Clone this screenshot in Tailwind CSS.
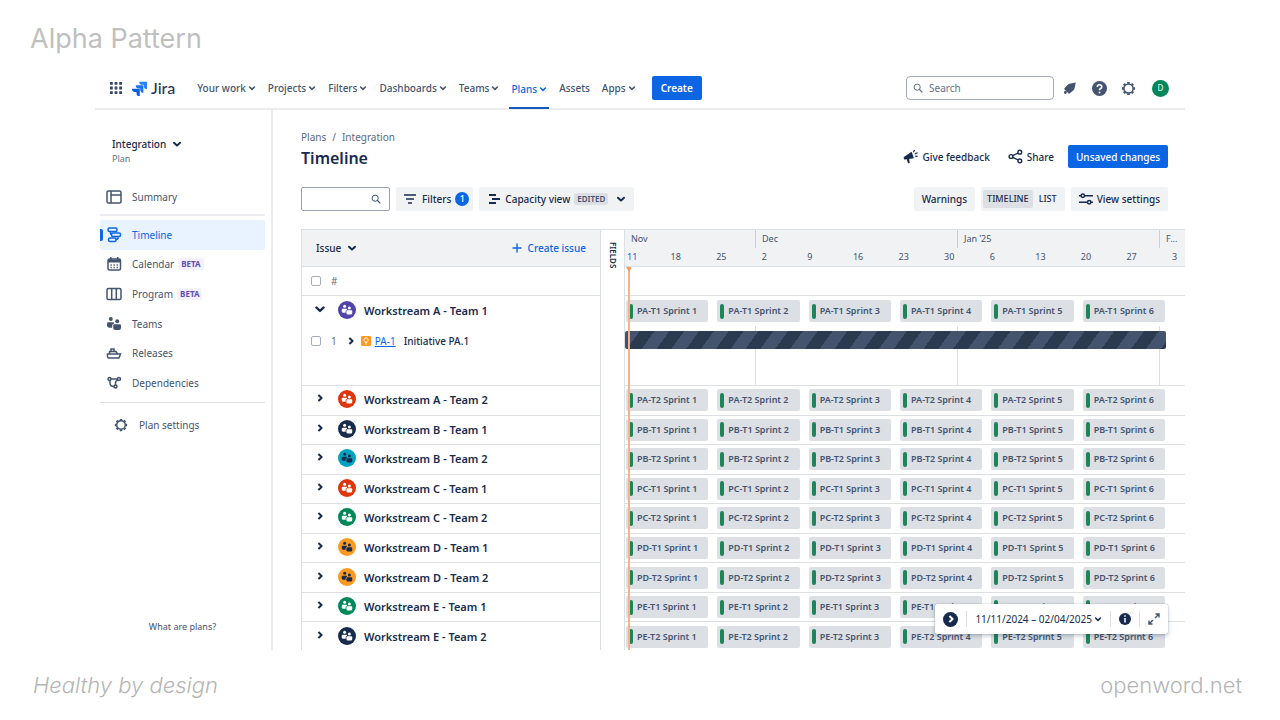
<!DOCTYPE html>
<html lang="en">
<head>
<meta charset="utf-8">
<meta name="viewport" content="width=device-width, initial-scale=1">
<title>Timeline - Integration - Jira</title>
<script src="https://cdn.jsdelivr.net/npm/@tailwindcss/browser@4"></script>
</head>
<body class="min-h-screen flex flex-col bg-white font-['Noto_Sans',sans-serif] text-[10px] leading-4 text-[#172b4d]">

<svg class="hidden" aria-hidden="true">
  <symbol id="chev" viewBox="0 0 8 8"><path d="M1.6 3 4 5.3 6.4 3" fill="none" stroke="currentColor" stroke-width="1.6" stroke-linecap="round" stroke-linejoin="round"/></symbol>
  <symbol id="chevr" viewBox="0 0 8 10"><path d="M2.4 2 5.6 5 2.4 8" fill="none" stroke="currentColor" stroke-width="2" stroke-linejoin="round"/></symbol>
  <symbol id="gear" viewBox="0 0 16 16"><circle cx="8" cy="8" r="4.9" fill="none" stroke="currentColor" stroke-width="1.6"/><path d="M8 1v2M8 13v2M1 8h2M13 8h2M3.1 3.1l1.3 1.3M11.6 11.6l1.3 1.3M3.1 12.9l1.3-1.3M11.6 4.4l1.3-1.3" stroke="currentColor" stroke-width="2.8"/></symbol>
  <symbol id="search" viewBox="0 0 12 12"><circle cx="5" cy="5" r="3.7" fill="none" stroke="currentColor" stroke-width="1.2"/><path d="m7.8 7.8 3 3" stroke="currentColor" stroke-width="1.3" stroke-linecap="round"/></symbol>
  <symbol id="people" viewBox="0 0 16 16" fill="currentColor"><circle cx="4.800" cy="3" r="2"/><circle cx="11.200" cy="5.200" r="2"/><path d="M1 7.600Q1 6.200 2.300 6.200H7.300Q8 6.200 8 7v.700Q6.200 7.900 6.200 9.500v2.300H3.200Q1 11.600 1 9.500zM7.200 9.300Q7.200 8.300 8.200 8.300H14Q15 8.300 15 9.300V12Q15 14 13 14H9.200Q7.200 14 7.200 12z"/></symbol>
</svg>

<header class="h-[68px] pl-[30px] flex items-center pb-1 pt-3.5">
  <p class="font-['Inter','Liberation_Sans',sans-serif] text-[27px] leading-8 text-[#bfbfbf]">Alpha Pattern</p>
</header>

<div class="mx-[95px] h-[582px] flex flex-col overflow-hidden">
  <header class="h-[42px] shrink-0 border-b-2 border-[#ecedf0] flex items-stretch pl-[13px] pr-4 text-[#44546f]">
    <button type="button" aria-label="Switch apps" class="self-center p-0.5">
      <svg class="size-3" viewBox="0 0 12 12" fill="#344563"><path d="M0 0h2.800v2.800H0zM4.600 0h2.800v2.800H4.600zM9.200 0H12v2.800H9.200zM0 4.600h2.800v2.800H0zM4.600 4.600h2.800v2.800H4.600zM9.200 4.600H12v2.800H9.200zM0 9.200h2.800V12H0zM4.600 9.200h2.800V12H4.600zM9.200 9.200H12V12H9.200z"/></svg>
    </button>
    <a href="#" class="ml-2 self-center flex items-center gap-1 text-[#253858]">
      <svg class="size-[15px]" viewBox="0 0 24 24"><path d="M23 1H11.700a5.100 5.100 0 0 0 5.100 5.100h2V8A5.100 5.100 0 0 0 24 13V2a1 1 0 0 0-1-1z" fill="#2684ff"/><path d="M17.200 6.800H6a5.100 5.100 0 0 0 5.100 5.100h2v2a5.100 5.100 0 0 0 5.100 5V7.800a1 1 0 0 0-1-1z" fill="#1d74ee"/><path d="M11.500 12.500H0a5.100 5.100 0 0 0 5.200 5.100h2v2a5.100 5.100 0 0 0 5.200 5V13.500a1 1 0 0 0-.900-1z" fill="#0c5cd8"/></svg>
      <span class="font-['Lato',sans-serif] font-medium text-base leading-5">Jira</span>
    </a>
    <nav class="ml-5 flex gap-2 font-medium" id="nav"></nav>
    <button type="button" class="ml-3.5 self-center h-6 px-[9px] rounded-xs bg-[#0c66e4] text-white font-semibold">Create</button>
    <div class="ml-auto self-center flex items-center">
      <label class="w-[148px] h-6 px-1.5 flex items-center gap-1.5 rounded border border-[#a3a9b5] text-[#626f86]">
        <svg class="size-2.5 shrink-0"><use href="#search"/></svg>
        <input type="search" aria-label="Search" placeholder="Search" class="w-full min-w-0 outline-none placeholder:text-[#626f86]">
      </label>
      <button type="button" aria-label="Notifications" class="ml-2.5"><svg class="size-3" viewBox="0 0 12 12" fill="#44546f"><path d="M11.800.4 5.500 1.700Q4.400 2 3.700 2.800L.5 6.300Q0 6.900.600 7.400L4.700 11.400Q5.300 12 5.800 11.300L9.500 8.200Q10.300 7.400 10.500 6.500zM.3 9.200q1.200-.7 2 .1t.1 2.100Q1 12.300.4 11.600-.2 10.600.3 9.200z"/></svg></button>
      <button type="button" aria-label="Help" class="ml-4"><svg class="size-[15px]" viewBox="0 0 16 16"><circle cx="8" cy="8" r="8" fill="#44546f"/><path d="M5.600 6.300Q5.700 4 8 4t2.400 2.100q0 1.200-1.200 1.900Q8 8.700 8 9.900" fill="none" stroke="#fff" stroke-width="1.700"/><circle cx="8" cy="12.200" r="1.100" fill="#fff"/></svg></button>
      <button type="button" aria-label="Settings" class="ml-3.5 text-[#44546f]"><svg class="size-[15px]"><use href="#gear"/></svg></button>
      <button type="button" aria-label="Account" class="ml-4 size-[17px] rounded-full bg-[#00875a] text-white text-[8px] leading-none">D</button>
    </div>
  </header>

  <div class="flex-1 min-h-0 flex">
    <aside class="w-[178px] shrink-0 border-r-2 border-[#ecedf0] pl-[5px] pr-[6px] flex flex-col text-[#44546f]">
      <button type="button" class="mt-[26px] pl-3 flex items-center gap-1.5 font-medium text-[#172b4d]">Integration <svg class="size-2.5"><use href="#chev"/></svg></button>
      <p class="pl-3 pt-px text-[9px] leading-3 text-[#626f86]">Plan</p>
      <a href="#" class="mt-[17px] h-[30px] pl-1.5 flex items-center gap-2.5"><svg class="w-4 h-3.5" viewBox="0 0 16 14" fill="none" stroke="currentColor" stroke-width="1.500"><rect x="1" y="1" width="14" height="12" rx="1.500"/><path d="M5 1v12M5 5h10"/></svg>Summary</a>
      <hr class="mt-[2px] border-t-2 border-[#ecedf0]">
      <nav class="mt-1 h-[178px] grid grid-rows-6" id="side"></nav>
      <hr class="mt-1 border-[#dcdfe4]">
      <a href="#" class="mt-3.5 pl-3.5 flex items-center gap-[11px]"><svg class="size-3.5"><use href="#gear"/></svg>Plan settings</a>
      <a href="#" class="mt-auto mb-[15px] text-center text-[9px] leading-4">What are plans?</a>
    </aside>

    <main class="flex-1 min-w-0 pl-7 flex flex-col">
      <div class="mt-[19px] pr-[17px] flex items-end">
        <div>
          <nav aria-label="Breadcrumb" class="text-[#5a6880] flex gap-1.5"><a href="#">Plans</a><span>/</span><a href="#">Integration</a></nav>
          <h1 class="pt-px text-base leading-6 font-semibold">Timeline</h1>
        </div>
        <div class="ml-auto mb-0.5 flex items-center font-medium">
          <button type="button" class="flex items-center gap-1"><svg class="size-[15px]" viewBox="0 0 16 16" fill="#172b4d"><path d="M.6 8.800 9.200 2.800 11.600 9.800 6.500 10.600 7.200 14.600 5.400 15.400 4 11 1.300 11.200z"/><path d="m11 3.500 1.300-2.300M12.600 5.200l3-1.200M13 7.500l2.600.4" stroke="#172b4d" stroke-width="1.300"/></svg>Give feedback</button>
          <button type="button" class="ml-[18px] flex items-center gap-1"><svg class="size-[15px]" viewBox="0 0 16 16" fill="none" stroke="#172b4d" stroke-width="1.500"><circle cx="3.200" cy="8" r="2"/><circle cx="12.600" cy="3.400" r="2"/><circle cx="12.600" cy="12.600" r="2"/><path d="m5 7.100 5.800-2.800M5 8.900l5.800 2.800"/></svg>Share</button>
          <button type="button" class="ml-3.5 h-[23px] px-2 rounded-xs bg-[#0c66e4] text-white">Unsaved changes</button>
        </div>
      </div>

      <div class="mt-[17px] pr-[17px] flex items-center gap-1.5 font-medium">
        <label class="w-[89px] h-6 px-2 flex items-center rounded-xs border border-[#9aa1ae] text-[#44546f]"><input type="text" aria-label="Search issues" class="w-full min-w-0 outline-none"><svg class="size-2.5 shrink-0"><use href="#search"/></svg></label>
        <button type="button" class="h-6 pl-1.5 pr-1 flex items-center gap-1 rounded-xs bg-[#f1f2f4]"><svg class="size-4" viewBox="0 0 16 16" fill="none" stroke="#172b4d" stroke-width="1.400"><path d="M2 4h12M4 8h8M6 12h4"/></svg>Filters<span class="size-3.5 rounded-full bg-[#0c66e4] text-white text-[9px] leading-3.5">1</span></button>
        <button type="button" class="h-6 px-2 flex items-center gap-1 rounded-xs bg-[#f1f2f4]"><svg class="size-3.5" viewBox="0 0 14 14" stroke="#172b4d" stroke-width="2"><path d="M2 3h7M5 7h8M2 11h7"/></svg>Capacity view<span class="px-[3px] rounded-xs bg-[#dcdfe4] text-[8px] leading-3 font-semibold text-[#44546f]">EDITED</span><svg class="ml-1 size-2.5"><use href="#chev"/></svg></button>
        <button type="button" class="ml-auto h-6 px-2 rounded-xs bg-[#f1f2f4]">Warnings</button>
        <div class="h-6 px-0.5 flex items-center rounded-xs bg-[#f1f2f4] text-[9px]"><button type="button" class="h-[18px] px-1 rounded-xs bg-[#dcdfe4]">TIMELINE</button><button type="button" class="h-[18px] px-1.5">LIST</button></div>
        <button type="button" class="h-6 px-2 flex items-center gap-1 rounded-xs bg-[#f1f2f4]"><svg class="size-3.5" viewBox="0 0 14 14" fill="none" stroke="#172b4d" stroke-width="1.500"><path d="M0 3.800h2M5.500 3.800H14M0 10.200h8.500M12 10.200h2"/><circle cx="3.800" cy="3.800" r="1.700"/><circle cx="10.200" cy="10.200" r="1.700"/></svg>View settings</button>
      </div>

      <div class="relative mt-[18px] flex-1 min-h-0 flex overflow-hidden border-t border-[#dcdfe4]">
        <table class="w-[300px] shrink-0 block border-x border-[#dcdfe4]">
          <thead class="block">
            <tr class="h-[37px] bg-[#f1f2f4] border-b border-[#dcdfe4] flex items-center px-3.5 justify-between">
              <th class="font-medium"><button type="button" class="flex items-center gap-1.5">Issue <svg class="size-2.5"><use href="#chev"/></svg></button></th>
              <th class="font-medium"><button type="button" class="flex items-center gap-1.5 text-[#0c66e4]"><svg class="size-2.5" viewBox="0 0 10 10" stroke="currentColor" stroke-width="1.400"><path d="M5 .5v9M.5 5h9"/></svg>Create issue</button></th>
            </tr>
            <tr class="h-[29px] border-b border-[#dcdfe4] flex items-center pl-[9px] text-[#626f86]">
              <td class="flex"><input type="checkbox" aria-label="Select all issues" class="appearance-none size-2.5 rounded-xs border border-[#a5adba]"></td>
              <td class="pl-2.5">#</td>
            </tr>
          </thead>
          <tbody class="block h-[89px]">
            <tr class="h-[30px] flex items-center pl-3">
              <td class="flex pb-1"><button type="button" aria-label="Collapse"><svg class="size-3"><use href="#chev"/></svg></button></td>
              <td class="pl-3 pb-0.5"><span class="size-[18px] rounded-full bg-[#5243aa] text-white flex items-center justify-center"><svg class="size-3"><use href="#people"/></svg></span></td>
              <td class="pl-2 text-[11px] font-semibold">Workstream A - Team 1</td>
            </tr>
            <tr class="h-[29px] flex items-center pl-[9px]">
              <td class="flex"><input type="checkbox" aria-label="Select PA-1" class="appearance-none size-2.5 rounded-xs border border-[#a5adba]"></td>
              <td class="pl-2.5 text-[#626f86]">1</td>
              <td class="pl-2.5 flex"><button type="button" aria-label="Expand PA-1"><svg class="w-2 h-2.5"><use href="#chevr"/></svg></button></td>
              <td class="pl-1.5 flex"><svg class="size-2.5" viewBox="0 0 10 10"><rect width="10" height="10" rx="1" fill="#ff991f"/><path d="M4 6.400V5.600a2 2 0 1 1 2 0v.800zM4 8h2" fill="none" stroke="#fff" stroke-width=".900"/></svg></td>
              <td class="pl-1"><a href="#" class="underline text-[#0c66e4]">PA-1</a></td>
              <td class="pl-2 font-medium">Initiative PA.1</td>
            </tr>
          </tbody>
          <tbody class="grid grid-rows-9 h-[267px] border-t border-[#dcdfe4]" id="teams"></tbody>
        </table>

        <div class="w-6 shrink-0 border-r border-[#dcdfe4] flex justify-center pt-3"><button type="button" class="self-start [writing-mode:vertical-rl] text-[8px] leading-3 font-semibold">FIELDS</button></div>

        <div class="relative flex-1 min-w-0 text-[#44546f]">
          <div class="h-[37px] bg-[#f1f2f4] border-b border-[#dcdfe4] text-[9px]">
            <div class="h-[18px] grid grid-cols-[131fr_202fr_202fr_25fr] leading-[18px]">
              <span class="pl-1.5 border-r border-[#c8ccd4]">Nov</span><span class="pl-1.5 border-r border-[#c8ccd4]">Dec</span><span class="pl-1.5 border-r border-[#c8ccd4]">Jan ’25</span><span class="pl-1.5">F...</span>
            </div>
            <div class="h-[18px] grid grid-cols-[repeat(12,365fr)_104fr] leading-[18px]" id="weeks"></div>
          </div>
          <div class="h-[29px] border-b border-[#dcdfe4]"></div>
          <div class="h-[30px] pl-px pr-5 grid grid-cols-6 gap-[9px] items-center" data-code="PA-T1"></div>
          <div class="relative h-[59px] pt-[5px] pr-[19px]">
            <div class="absolute inset-0 grid grid-cols-[131fr_202fr_202fr_25fr]"><span class="border-r border-[#dcdfe4]"></span><span class="border-r border-[#dcdfe4]"></span><span class="border-r border-[#dcdfe4]"></span></div>
            <div class="relative h-[18px] rounded-xs bg-[repeating-linear-gradient(126deg,#44546f_0_12px,#2c3a4f_12px_24px)]"></div>
          </div>
          <div class="grid grid-rows-9 h-[267px] border-t border-[#dcdfe4]" id="lanes"></div>
          <div class="absolute left-[3px] top-[37px] bottom-0 w-0.5 bg-[#f9b285]"></div>
          <svg class="absolute left-px top-[37px] w-[5px] h-[5px]" viewBox="0 0 5 5"><path d="M0 0h5v2L3 5z" fill="#f59b5c"/></svg>
        </div>

        <div class="absolute right-[17px] bottom-4 h-[30px] px-2 flex items-center bg-white rounded-xs shadow-[0_0_1px_#091e4280,0_2px_4px_#091e4240]">
          <button type="button" aria-label="Jump to date" class="size-[15px] rounded-full bg-[#172b4d] text-white flex items-center justify-center"><svg class="w-2 h-2.5"><use href="#chevr"/></svg></button>
          <span class="ml-2 h-4 w-px bg-[#dcdfe4]"></span>
          <button type="button" class="ml-2 flex items-center gap-0.5">11/11/2024 – 02/04/2025 <svg class="size-2"><use href="#chev"/></svg></button>
          <span class="ml-2 h-4 w-px bg-[#dcdfe4]"></span>
          <button type="button" aria-label="Legend" class="ml-2"><svg class="size-3" viewBox="0 0 12 12"><circle cx="6" cy="6" r="6" fill="#172b4d"/><path d="M6 5v4.500M6 2.300v1.500" stroke="#fff" stroke-width="1.500"/></svg></button>
          <span class="ml-2 h-4 w-px bg-[#dcdfe4]"></span>
          <button type="button" aria-label="Full screen" class="ml-2"><svg class="size-3" viewBox="0 0 12 12" fill="none" stroke="#44546f" stroke-width="1.400"><path d="M7.500 1H11v3.500M11 1 7 5M4.500 11H1V7.500M1 11l4-4"/></svg></button>
        </div>
      </div>
    </main>
  </div>
</div>

<footer class="flex-1 pl-[33px] pr-[38px] flex items-center justify-between font-['Inter','Liberation_Sans',sans-serif] font-light text-[22px] leading-8 text-[#b5b5b5]">
  <p class="italic">Healthy by design</p>
  <p>openword.net</p>
</footer>

<script>
const nav = [['Your work',1],['Projects',1],['Filters',1],['Dashboards',1],['Teams',1],['Plans',1],['Assets',0],['Apps',1]];
document.getElementById('nav').innerHTML = nav.map(([t, menu]) => {
  const chev = menu ? '<svg class="size-2"><use href="#chev"/></svg>' : '';
  const cls = t === 'Plans'
    ? 'px-0.5 -mb-px flex items-center gap-0.5 text-[#0c66e4] shadow-[inset_0_-2px_#1558bc]'
    : 'px-0.5 flex items-center gap-0.5';
  return menu ? `<button type="button" class="${cls}">${t}${chev}</button>` : `<a href="#" class="${cls}">${t}</a>`;
}).join('');

const side = [
  ['Timeline', '<rect x="2" y="1" width="9" height="3.500" rx="1.500"/><rect x="5.500" y="6" width="9" height="3.500" rx="1.500"/><rect x="2.500" y="11" width="7.500" height="3.500" rx="1.500"/><path d="M4.500 4.500v1.500q0 1.500 1 1.500M12 9.500v1.500q0 1.500-2 1.500"/>'],
  ['Calendar', '<rect x="2" y="3" width="12.500" height="11" rx="1.500"/><path d="M2 5h12.500" stroke-width="3"/><path d="M4.800 1v3M11.600 1v3"/><path d="M4.500 9h1.300M7.500 9h1.300M10.600 9h1.300M4.500 11.600h1.300M7.500 11.600h1.300M10.600 11.600h1.300"/>', 1],
  ['Program', '<rect x="1" y="2.500" width="14" height="11" rx="1.500"/><path d="M5.700 2.500v11M10.300 2.500v11"/>', 1],
  ['Teams', '<use href="#people" stroke="none"/>'],
  ['Releases', '<path d="M1.500 9H14.500L13 13H3Q1.500 13 1.500 11.500zM3.500 9V6.500H10L11.500 9M5 6.500V4H8V6.500"/>'],
  ['Dependencies', '<circle cx="3.500" cy="4" r="1.500"/><circle cx="13" cy="4" r="1.500"/><circle cx="9.500" cy="11.500" r="1.500"/><path d="M5 4h6.500M4 5.500V8q0 3.500 4 3.500M9.500 10V7.500q0-1.500 2.300-2.500"/>']
];
document.getElementById('side').innerHTML = side.map(([t, icon, beta]) => {
  const cls = t === 'Timeline'
    ? 'relative pl-1.5 flex items-center gap-2.5 rounded-xs bg-[#e9f2ff] text-[#0c66e4] before:absolute before:left-0 before:top-[9px] before:h-3 before:w-[3px] before:rounded-r-xs before:bg-[#0c66e4]'
    : 'pl-1.5 flex items-center gap-2.5';
  const tag = beta ? ' <span class="-ml-1.5 px-[3px] rounded-xs bg-[#f3f0ff] text-[8px] leading-3 font-bold text-[#5e4db2]">BETA</span>' : '';
  return `<a href="#" class="${cls}"><svg class="size-4" viewBox="0 0 16 16" fill="none" stroke="currentColor" stroke-width="1.500">${icon}</svg>${t}${tag}</a>`;
}).join('');

const teams = [
  ['A', 2, 'bg-[#de350b] text-white'], ['B', 1, 'bg-[#172b4d] text-white'], ['B', 2, 'bg-[#00a3bf] text-[#172b4d]'],
  ['C', 1, 'bg-[#de350b] text-white'], ['C', 2, 'bg-[#00875a] text-white'], ['D', 1, 'bg-[#ff991f] text-[#172b4d]'],
  ['D', 2, 'bg-[#ff991f] text-[#172b4d]'], ['E', 1, 'bg-[#00875a] text-white'], ['E', 2, 'bg-[#172b4d] text-white']
];
document.getElementById('teams').innerHTML = teams.map(([w, n, c]) => `
  <tr class="flex items-center pl-3 border-b border-[#dcdfe4]">
    <td class="pl-0.5 pb-1 flex"><button type="button" aria-label="Expand"><svg class="w-2 h-2.5"><use href="#chevr"/></svg></button></td>
    <td class="pl-3.5 pb-0.5"><span class="size-[18px] rounded-full flex items-center justify-center ${c}"><svg class="size-3"><use href="#people"/></svg></span></td>
    <td class="pl-2 text-[11px] font-semibold">Workstream ${w} - Team ${n}</td>
  </tr>`).join('');

const chips = code => [1, 2, 3, 4, 5, 6].map(i =>
  `<div class="h-[22px] pl-[3px] flex items-center gap-1 rounded-xs bg-[#dcdfe4] text-[9px] leading-4 font-semibold whitespace-nowrap"><span class="w-1 h-[15px] rounded-xs bg-[#1f845a]"></span>${code} Sprint ${i}</div>`).join('');
document.getElementById('lanes').innerHTML = teams.map(([w, n]) =>
  `<div class="pl-px pr-5 grid grid-cols-6 gap-[9px] items-center border-b border-[#dcdfe4]">${chips('P' + w + '-T' + n)}</div>`).join('');
document.querySelector('[data-code]').innerHTML = chips('PA-T1');

document.getElementById('weeks').innerHTML = [11, 18, 25, 2, 9, 16, 23, 30, 6, 13, 20, 27, 3].map((d, i) =>
  i ? `<span>${d}</span>` : `<span class="pl-0.5 text-[#0c66e4]">${d}</span>`).join('');
</script>
</body>
</html>
